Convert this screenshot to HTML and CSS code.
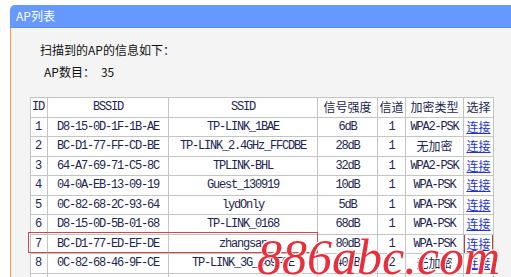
FILE: index.html
```html
<!DOCTYPE html>
<html lang="zh-CN">
<head>
    <meta charset="UTF-8">
    <title>AP列表</title>
    <link rel="stylesheet" href="styles.css">
</head>
<body>
    <div class="page">
        <div class="title-bar">AP列表</div>
        <div class="panel">
            <p class="info">扫描到的AP的信息如下：</p>
            <p class="info count">AP数目：<span class="num">35</span></p>

            <div class="table-wrap">
                <table class="ap-table">
                    <colgroup>
                        <col style="width:17px">
                        <col style="width:121px">
                        <col style="width:149px">
                        <col style="width:60px">
                        <col style="width:28px">
                        <col style="width:58px">
                        <col style="width:30px">
                    </colgroup>
                    <tr>
                        <th class="id">ID</th>
                        <th class="mono">BSSID</th>
                        <th class="mono">SSID</th>
                        <th>信号强度</th>
                        <th>信道</th>
                        <th>加密类型</th>
                        <th>选择</th>
                    </tr>
                    <tr>
                        <td class="id">1</td><td class="mono">D8-15-0D-1F-1B-AE</td><td class="mono">TP-LINK_1BAE</td>
                        <td class="mono">6dB</td><td class="mono">1</td><td class="mono">WPA2-PSK</td><td><a href="#">连接</a></td>
                    </tr>
                    <tr>
                        <td class="id">2</td><td class="mono">BC-D1-77-FF-CD-BE</td><td class="mono">TP-LINK_2.4GHz_FFCDBE</td>
                        <td class="mono">28dB</td><td class="mono">1</td><td>无加密</td><td><a href="#">连接</a></td>
                    </tr>
                    <tr>
                        <td class="id">3</td><td class="mono">64-A7-69-71-C5-8C</td><td class="mono">TPLINK-BHL</td>
                        <td class="mono">32dB</td><td class="mono">1</td><td class="mono">WPA2-PSK</td><td><a href="#">连接</a></td>
                    </tr>
                    <tr>
                        <td class="id">4</td><td class="mono">04-0A-EB-13-09-19</td><td class="mono">Guest_130919</td>
                        <td class="mono">10dB</td><td class="mono">1</td><td class="mono">WPA-PSK</td><td><a href="#">连接</a></td>
                    </tr>
                    <tr>
                        <td class="id">5</td><td class="mono">0C-82-68-2C-93-64</td><td class="mono">lydOnly</td>
                        <td class="mono">5dB</td><td class="mono">1</td><td class="mono">WPA-PSK</td><td><a href="#">连接</a></td>
                    </tr>
                    <tr>
                        <td class="id">6</td><td class="mono">D8-15-0D-5B-01-68</td><td class="mono">TP-LINK_0168</td>
                        <td class="mono">68dB</td><td class="mono">1</td><td class="mono">WPA-PSK</td><td><a href="#">连接</a></td>
                    </tr>
                    <tr>
                        <td class="id">7</td><td class="mono">BC-D1-77-ED-EF-DE</td><td class="mono">zhangsan</td>
                        <td class="mono">80dB</td><td class="mono">1</td><td class="mono">WPA-PSK</td><td><a href="#" class="marked">连接</a></td>
                    </tr>
                    <tr>
                        <td class="id">8</td><td class="mono">0C-82-68-46-9F-CE</td><td class="mono">TP-LINK_3G_469FCE</td>
                        <td class="mono">40dB</td><td class="mono">2</td><td>无加密</td><td><a href="#">连接</a></td>
                    </tr>
                    <tr class="spill">
                        <td class="id"></td><td></td><td></td><td></td><td></td><td></td><td></td>
                    </tr>
                </table>
                <!-- red box marking the chosen network -->
                <div class="row-mark"></div>
            </div>
        </div>
    </div>

    <div class="watermark">886abc.com</div>
</body>
</html>
```

FILE: styles.css
```css
/* AP list page */
body {
    margin: 0;
    background-color: #fff;
    font-family: "Noto Sans CJK SC", sans-serif;
    font-size: 12px;
    color: #1c2550;
    overflow: hidden;
    height: 277px;
}

.page {
    padding: 5px 0 0 10px;
}

.title-bar {
    height: 22px;
    line-height: 22px;
    padding-left: 6px;
    background-color: #6699ff;
    border-bottom: 1px solid #5d8cf0;
    border-radius: 5px 0 0 0;
    color: #fff;
}

.panel {
    background-color: #f4f4f4;
    border-left: 1px solid #f0a040;
    padding: 14px 0 20px 19px;
}

.info {
    margin: 0 0 6px 10px;
    line-height: 16px;
    color: #111;
}

.count {
    margin-left: 14px;
}

.count .num {
    margin-left: 6px;
}

.table-wrap {
    position: relative;
    margin-top: 17px;
}

.ap-table {
    table-layout: fixed;
    width: 463px;
    border-collapse: collapse;
    background-color: #fff;
}

.ap-table th,
.ap-table td {
    height: 18.5px;
    padding: 0;
    border: 1px solid #c4c4c4;
    text-align: center;
    font-weight: normal;
    white-space: nowrap;
    overflow: hidden;
    line-height: 16px;
}

.ap-table .mono {
    font-family: "Liberation Mono", monospace;
    font-size: 12px;
    letter-spacing: -1.2px;
}

.ap-table .id {
    text-align: left;
    padding-left: 4px;
    font-family: "Liberation Mono", monospace;
    font-size: 12px;
}

.ap-table th.id {
    padding-left: 1px;
    letter-spacing: -1.2px;
}

.ap-table a {
    color: #2233cc;
    text-decoration: underline;
}

.ap-table a.marked {
    outline: 1px solid #c04040;
    outline-offset: 1px;
}

.row-mark {
    position: absolute;
    left: -2px;
    top: 135px;
    width: 288px;
    height: 19px;
    border: 1px solid #d04848;
}

.watermark {
    position: absolute;
    left: 257px;
    top: 232px;
    font-family: "Liberation Serif", serif;
    font-style: italic;
    font-size: 50px;
    line-height: 50px;
    color: #e8303c;
    text-shadow: 1px 1px 0 #fff, -1px -1px 0 #fff;
}
```
